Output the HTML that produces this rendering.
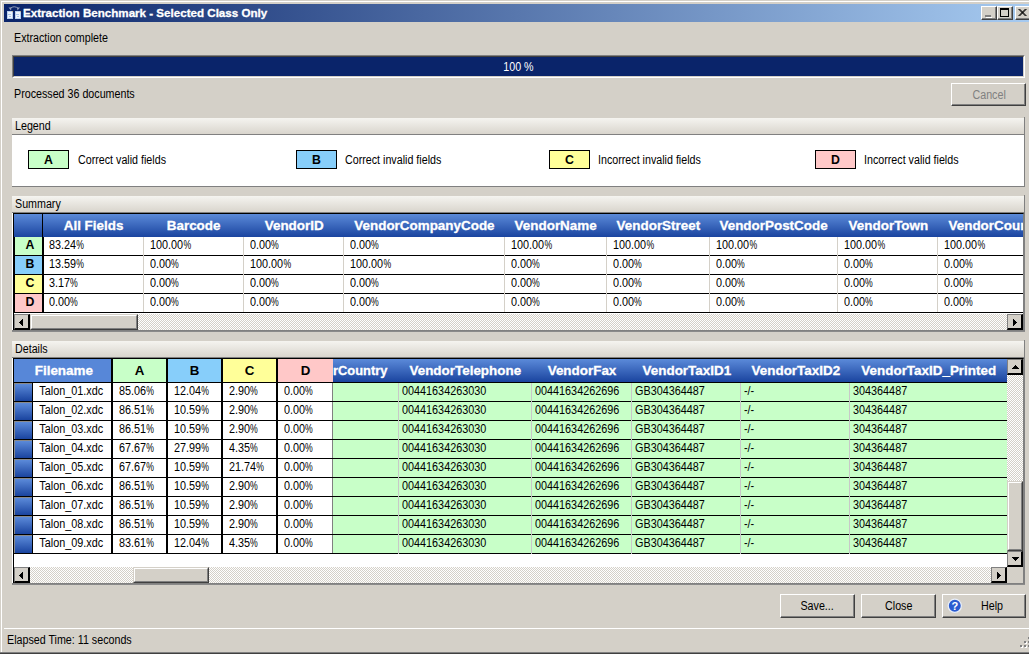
<!DOCTYPE html><html><head><meta charset="utf-8"><style>
*{margin:0;padding:0;box-sizing:border-box}
html,body{width:1029px;height:654px;overflow:hidden;background:#d4d0c8;font-family:"Liberation Sans",sans-serif;font-size:11px;color:#000}
.a{position:absolute}
.t{position:absolute;white-space:pre}
.btn{position:absolute;background:#d4d0c8;border-top:1px solid #fff;border-left:1px solid #fff;border-right:1px solid #404040;border-bottom:1px solid #404040}
.btn:after{content:"";position:absolute;left:0;top:0;right:0;bottom:0;border-right:1px solid #808080;border-bottom:1px solid #808080}
.thumb{position:absolute;background:#d4d0c8;border-top:1px solid #d4d0c8;border-left:1px solid #d4d0c8;border-right:1px solid #404040;border-bottom:1px solid #404040}
.thumb:after{content:"";position:absolute;left:0;top:0;right:0;bottom:0;border-top:1px solid #fff;border-left:1px solid #fff;border-right:1px solid #808080;border-bottom:1px solid #808080}
.sb{position:absolute;width:16px;height:16px;background:#d4d0c8;border-top:1px solid #808080;border-left:1px solid #808080;border-right:2px solid #000;border-bottom:2px solid #000}
.sb svg{position:absolute}
.ghdr{position:absolute;background:linear-gradient(#f5f4f0,#d9d5cd)}
.colh{position:absolute;background:linear-gradient(#5b8ad9,#1a449f)}
.chk{background-color:#fff;background-image:linear-gradient(45deg,#d4d0c8 25%,transparent 25%,transparent 75%,#d4d0c8 75%),linear-gradient(45deg,#d4d0c8 25%,transparent 25%,transparent 75%,#d4d0c8 75%);background-size:2px 2px;background-position:0 0,1px 1px}
</style></head><body>
<div class="a" style="left:1px;top:1px;width:1028px;height:1px;background:#fff"></div>
<div class="a" style="left:1px;top:1px;width:1px;height:651px;background:#fff"></div>
<div class="a" style="left:0;top:652px;width:1029px;height:1px;background:#808080"></div>
<div class="a" style="left:0;top:653px;width:1029px;height:1px;background:#404040"></div>
<div class="a" style="left:4px;top:4px;width:1025px;height:18px;background:linear-gradient(90deg,#0a246a,#a6caf0)"></div>
<svg class="a" style="left:4px;top:4px" width="18" height="18" viewBox="0 0 18 18">
<path d="M6 4.5 Q10 1 14.5 4.5" fill="none" stroke="#8f9ab8" stroke-width="1"/>
<path d="M4.5 3.5 L7 6.5 L7.5 3.5 Z M16 3.5 L13.5 6.5 L13 3.5 Z" fill="#8f9ab8"/>
<rect x="3" y="7" width="6" height="8" fill="#b8d0f0"/><rect x="11" y="7" width="6" height="8" fill="#b8d0f0"/>
<rect x="4" y="8" width="4" height="6" fill="#eef4fc"/><rect x="12" y="8" width="4" height="6" fill="#eef4fc"/>
<rect x="4" y="10" width="3" height="1" fill="#a8c4ea"/><rect x="12" y="10" width="3" height="1" fill="#a8c4ea"/>
<rect x="5" y="12" width="2" height="1" fill="#a8c4ea"/><rect x="13" y="12" width="2" height="1" fill="#a8c4ea"/>
<rect x="8" y="7" width="1" height="1" fill="#c8b080"/><rect x="16" y="7" width="1" height="1" fill="#c8b080"/>
</svg>
<div class="t" style="left:23px;top:3px;text-align:left;font-size:11.6px;line-height:20px;color:#fff;font-weight:bold;-webkit-text-stroke:0.3px #fff;"><span style="display:inline-block;transform:scaleX(1.0);transform-origin:0 0">Extraction Benchmark - Selected Class Only</span></div>
<div class="btn" style="left:981px;top:6px;width:16px;height:14px"></div>
<div class="btn" style="left:997px;top:6px;width:16px;height:14px"></div>
<div class="btn" style="left:1015px;top:6px;width:16px;height:14px"></div>
<div class="a" style="left:985px;top:15px;width:6px;height:2px;background:#808080"></div>
<div class="a" style="left:986px;top:17px;width:6px;height:1px;background:#fff"></div>
<div class="a" style="left:1000px;top:8px;width:9px;height:9px;border:1px solid #000;border-top-width:2px"></div>
<svg class="a" style="left:1018px;top:9px" width="10" height="7" viewBox="0 0 10 7"><path d="M0.5 0 L7.5 7 M7.5 0 L0.5 7 M1.5 0 L8.5 7 M8.5 0 L1.5 7" stroke="#000" stroke-width="1"/></svg>
<div class="t" style="left:14px;top:28px;text-align:left;font-size:12.3px;line-height:20px;color:#000;"><span style="display:inline-block;transform:scaleX(0.87);transform-origin:0 0">Extraction complete</span></div>
<div class="a" style="left:12px;top:55px;width:1013px;height:23px;border-top:1px solid #808080;border-left:1px solid #808080;border-right:1px solid #fff;border-bottom:1px solid #fff"></div>
<div class="a" style="left:13px;top:56px;width:1011px;height:21px;border-top:1px solid #404040;border-left:1px solid #404040;border-right:1px solid #d4d0c8;border-bottom:1px solid #d4d0c8;background:#0a246a"></div>
<div class="t" style="left:12px;top:57px;width:1013px;text-align:center;font-size:12.3px;line-height:20px;color:#fff;"><span style="display:inline-block;transform:scaleX(0.87);transform-origin:50% 0">100 %</span></div>
<div class="t" style="left:14px;top:84px;text-align:left;font-size:12.3px;line-height:20px;color:#000;"><span style="display:inline-block;transform:scaleX(0.87);transform-origin:0 0">Processed 36 documents</span></div>
<div class="btn" style="left:951px;top:83px;width:75px;height:23px"></div>
<div class="t" style="left:952px;top:85px;width:75px;text-align:center;font-size:12.3px;line-height:20px;color:#808080;"><span style="display:inline-block;transform:scaleX(0.87);transform-origin:50% 0">Cancel</span></div>
<div class="ghdr" style="left:12px;top:118px;width:1012px;height:16px"></div>
<div class="a" style="left:12px;top:134px;width:1012px;height:1px;background:#808080"></div>
<div class="a" style="left:12px;top:135px;width:1012px;height:51px;background:#fff"></div>
<div class="a" style="left:1024px;top:117px;width:1px;height:70px;background:#808080"></div>
<div class="a" style="left:12px;top:186px;width:1013px;height:1px;background:#808080"></div>
<div class="t" style="left:15px;top:116px;text-align:left;font-size:12.3px;line-height:20px;color:#000;"><span style="display:inline-block;transform:scaleX(0.87);transform-origin:0 0">Legend</span></div>
<div class="a" style="left:28px;top:150px;width:41px;height:19px;border:1px solid #000;background:#c8ffc8"></div>
<div class="t" style="left:28px;top:150px;width:41px;text-align:center;font-size:12.3px;line-height:20px;color:#000;font-weight:bold;"><span style="display:inline-block;transform:scaleX(1.0);transform-origin:50% 0">A</span></div>
<div class="t" style="left:78px;top:150px;text-align:left;font-size:12.3px;line-height:20px;color:#000;"><span style="display:inline-block;transform:scaleX(0.87);transform-origin:0 0">Correct valid fields</span></div>
<div class="a" style="left:296px;top:150px;width:41px;height:19px;border:1px solid #000;background:#87cefa"></div>
<div class="t" style="left:296px;top:150px;width:41px;text-align:center;font-size:12.3px;line-height:20px;color:#000;font-weight:bold;"><span style="display:inline-block;transform:scaleX(1.0);transform-origin:50% 0">B</span></div>
<div class="t" style="left:345px;top:150px;text-align:left;font-size:12.3px;line-height:20px;color:#000;"><span style="display:inline-block;transform:scaleX(0.87);transform-origin:0 0">Correct invalid fields</span></div>
<div class="a" style="left:549px;top:150px;width:41px;height:19px;border:1px solid #000;background:#ffff99"></div>
<div class="t" style="left:549px;top:150px;width:41px;text-align:center;font-size:12.3px;line-height:20px;color:#000;font-weight:bold;"><span style="display:inline-block;transform:scaleX(1.0);transform-origin:50% 0">C</span></div>
<div class="t" style="left:598px;top:150px;text-align:left;font-size:12.3px;line-height:20px;color:#000;"><span style="display:inline-block;transform:scaleX(0.87);transform-origin:0 0">Incorrect invalid fields</span></div>
<div class="a" style="left:815px;top:150px;width:41px;height:19px;border:1px solid #000;background:#ffc8c8"></div>
<div class="t" style="left:815px;top:150px;width:41px;text-align:center;font-size:12.3px;line-height:20px;color:#000;font-weight:bold;"><span style="display:inline-block;transform:scaleX(1.0);transform-origin:50% 0">D</span></div>
<div class="t" style="left:864px;top:150px;text-align:left;font-size:12.3px;line-height:20px;color:#000;"><span style="display:inline-block;transform:scaleX(0.87);transform-origin:0 0">Incorrect valid fields</span></div>
<div class="ghdr" style="left:12px;top:196px;width:1012px;height:16px"></div>
<div class="a" style="left:12px;top:212px;width:1012px;height:1px;background:#808080"></div>
<div class="a" style="left:12px;top:213px;width:1012px;height:117px;background:#fff"></div>
<div class="a" style="left:1024px;top:195px;width:1px;height:136px;background:#808080"></div>
<div class="a" style="left:12px;top:330px;width:1013px;height:1px;background:#808080"></div>
<div class="t" style="left:15px;top:194px;text-align:left;font-size:12.3px;line-height:20px;color:#000;"><span style="display:inline-block;transform:scaleX(0.87);transform-origin:0 0">Summary</span></div>
<div class="a" style="left:12px;top:331px;width:1013px;height:1px;background:#8a8a8a"></div>
<div class="a" style="left:13px;top:213px;width:1011px;height:117px;background:#fff;border-left:1px solid #000;border-top:1px solid #000;border-right:1px solid #808080"></div>
<div class="a" style="left:14px;top:214px;width:1009px;height:100px;overflow:hidden">
<div class="colh" style="left:0;top:0;width:28px;height:23px"></div>
<div class="a" style="left:0;top:23px;width:1px;height:76px;background:#000"></div>
<div class="a" style="left:28px;top:0;width:2px;height:99px;background:#000"></div>
<div class="colh" style="left:29px;top:0;width:101px;height:23px"></div>
<div class="t" style="left:29px;top:2px;width:101px;text-align:center;font-size:13.3px;line-height:20px;color:#fff;font-weight:bold;-webkit-text-stroke:0.3px #fff;"><span style="display:inline-block;transform:scaleX(1.01);transform-origin:50% 0">All Fields</span></div>
<div class="colh" style="left:130px;top:0;width:100px;height:23px"></div>
<div class="t" style="left:130px;top:2px;width:100px;text-align:center;font-size:13.3px;line-height:20px;color:#fff;font-weight:bold;-webkit-text-stroke:0.3px #fff;"><span style="display:inline-block;transform:scaleX(1.01);transform-origin:50% 0">Barcode</span></div>
<div class="colh" style="left:230px;top:0;width:100px;height:23px"></div>
<div class="t" style="left:230px;top:2px;width:100px;text-align:center;font-size:13.3px;line-height:20px;color:#fff;font-weight:bold;-webkit-text-stroke:0.3px #fff;"><span style="display:inline-block;transform:scaleX(1.01);transform-origin:50% 0">VendorID</span></div>
<div class="colh" style="left:330px;top:0;width:161px;height:23px"></div>
<div class="t" style="left:330px;top:2px;width:161px;text-align:center;font-size:13.3px;line-height:20px;color:#fff;font-weight:bold;-webkit-text-stroke:0.3px #fff;"><span style="display:inline-block;transform:scaleX(1.01);transform-origin:50% 0">VendorCompanyCode</span></div>
<div class="colh" style="left:491px;top:0;width:102px;height:23px"></div>
<div class="t" style="left:491px;top:2px;width:102px;text-align:center;font-size:13.3px;line-height:20px;color:#fff;font-weight:bold;-webkit-text-stroke:0.3px #fff;"><span style="display:inline-block;transform:scaleX(1.01);transform-origin:50% 0">VendorName</span></div>
<div class="colh" style="left:593px;top:0;width:103px;height:23px"></div>
<div class="t" style="left:593px;top:2px;width:103px;text-align:center;font-size:13.3px;line-height:20px;color:#fff;font-weight:bold;-webkit-text-stroke:0.3px #fff;"><span style="display:inline-block;transform:scaleX(1.01);transform-origin:50% 0">VendorStreet</span></div>
<div class="colh" style="left:696px;top:0;width:128px;height:23px"></div>
<div class="t" style="left:696px;top:2px;width:128px;text-align:center;font-size:13.3px;line-height:20px;color:#fff;font-weight:bold;-webkit-text-stroke:0.3px #fff;"><span style="display:inline-block;transform:scaleX(1.01);transform-origin:50% 0">VendorPostCode</span></div>
<div class="colh" style="left:824px;top:0;width:100px;height:23px"></div>
<div class="t" style="left:824px;top:2px;width:100px;text-align:center;font-size:13.3px;line-height:20px;color:#fff;font-weight:bold;-webkit-text-stroke:0.3px #fff;"><span style="display:inline-block;transform:scaleX(1.01);transform-origin:50% 0">VendorTown</span></div>
<div class="colh" style="left:924px;top:0;width:119px;height:23px"></div>
<div class="t" style="left:924px;top:2px;width:119px;text-align:center;font-size:13.3px;line-height:20px;color:#fff;font-weight:bold;-webkit-text-stroke:0.3px #fff;"><span style="display:inline-block;transform:scaleX(1.01);transform-origin:50% 0">VendorCountry</span></div>
<div class="a" style="left:1px;top:23px;width:27px;height:18px;background:#c8ffc8"></div>
<div class="t" style="left:2px;top:21px;width:28px;text-align:center;font-size:12.3px;line-height:20px;color:#000;font-weight:bold;"><span style="display:inline-block;transform:scaleX(1.0);transform-origin:50% 0">A</span></div>
<div class="t" style="left:35px;top:21px;text-align:left;font-size:12.3px;line-height:20px;color:#000;"><span style="display:inline-block;transform:scaleX(0.88);transform-origin:0 0">83.24<span style="display:inline-block;transform:scaleX(0.8);transform-origin:0 0;margin-right:-2px">%</span></span></div>
<div class="t" style="left:136px;top:21px;text-align:left;font-size:12.3px;line-height:20px;color:#000;"><span style="display:inline-block;transform:scaleX(0.88);transform-origin:0 0">100.00<span style="display:inline-block;transform:scaleX(0.8);transform-origin:0 0;margin-right:-2px">%</span></span></div>
<div class="t" style="left:236px;top:21px;text-align:left;font-size:12.3px;line-height:20px;color:#000;"><span style="display:inline-block;transform:scaleX(0.88);transform-origin:0 0">0.00<span style="display:inline-block;transform:scaleX(0.8);transform-origin:0 0;margin-right:-2px">%</span></span></div>
<div class="t" style="left:336px;top:21px;text-align:left;font-size:12.3px;line-height:20px;color:#000;"><span style="display:inline-block;transform:scaleX(0.88);transform-origin:0 0">0.00<span style="display:inline-block;transform:scaleX(0.8);transform-origin:0 0;margin-right:-2px">%</span></span></div>
<div class="t" style="left:497px;top:21px;text-align:left;font-size:12.3px;line-height:20px;color:#000;"><span style="display:inline-block;transform:scaleX(0.88);transform-origin:0 0">100.00<span style="display:inline-block;transform:scaleX(0.8);transform-origin:0 0;margin-right:-2px">%</span></span></div>
<div class="t" style="left:599px;top:21px;text-align:left;font-size:12.3px;line-height:20px;color:#000;"><span style="display:inline-block;transform:scaleX(0.88);transform-origin:0 0">100.00<span style="display:inline-block;transform:scaleX(0.8);transform-origin:0 0;margin-right:-2px">%</span></span></div>
<div class="t" style="left:702px;top:21px;text-align:left;font-size:12.3px;line-height:20px;color:#000;"><span style="display:inline-block;transform:scaleX(0.88);transform-origin:0 0">100.00<span style="display:inline-block;transform:scaleX(0.8);transform-origin:0 0;margin-right:-2px">%</span></span></div>
<div class="t" style="left:830px;top:21px;text-align:left;font-size:12.3px;line-height:20px;color:#000;"><span style="display:inline-block;transform:scaleX(0.88);transform-origin:0 0">100.00<span style="display:inline-block;transform:scaleX(0.8);transform-origin:0 0;margin-right:-2px">%</span></span></div>
<div class="t" style="left:930px;top:21px;text-align:left;font-size:12.3px;line-height:20px;color:#000;"><span style="display:inline-block;transform:scaleX(0.88);transform-origin:0 0">100.00<span style="display:inline-block;transform:scaleX(0.8);transform-origin:0 0;margin-right:-2px">%</span></span></div>
<div class="a" style="left:0;top:41px;width:1009px;height:1px;background:#000"></div>
<div class="a" style="left:1px;top:42px;width:27px;height:18px;background:#87cefa"></div>
<div class="t" style="left:2px;top:40px;width:28px;text-align:center;font-size:12.3px;line-height:20px;color:#000;font-weight:bold;"><span style="display:inline-block;transform:scaleX(1.0);transform-origin:50% 0">B</span></div>
<div class="t" style="left:35px;top:40px;text-align:left;font-size:12.3px;line-height:20px;color:#000;"><span style="display:inline-block;transform:scaleX(0.88);transform-origin:0 0">13.59<span style="display:inline-block;transform:scaleX(0.8);transform-origin:0 0;margin-right:-2px">%</span></span></div>
<div class="t" style="left:136px;top:40px;text-align:left;font-size:12.3px;line-height:20px;color:#000;"><span style="display:inline-block;transform:scaleX(0.88);transform-origin:0 0">0.00<span style="display:inline-block;transform:scaleX(0.8);transform-origin:0 0;margin-right:-2px">%</span></span></div>
<div class="t" style="left:236px;top:40px;text-align:left;font-size:12.3px;line-height:20px;color:#000;"><span style="display:inline-block;transform:scaleX(0.88);transform-origin:0 0">100.00<span style="display:inline-block;transform:scaleX(0.8);transform-origin:0 0;margin-right:-2px">%</span></span></div>
<div class="t" style="left:336px;top:40px;text-align:left;font-size:12.3px;line-height:20px;color:#000;"><span style="display:inline-block;transform:scaleX(0.88);transform-origin:0 0">100.00<span style="display:inline-block;transform:scaleX(0.8);transform-origin:0 0;margin-right:-2px">%</span></span></div>
<div class="t" style="left:497px;top:40px;text-align:left;font-size:12.3px;line-height:20px;color:#000;"><span style="display:inline-block;transform:scaleX(0.88);transform-origin:0 0">0.00<span style="display:inline-block;transform:scaleX(0.8);transform-origin:0 0;margin-right:-2px">%</span></span></div>
<div class="t" style="left:599px;top:40px;text-align:left;font-size:12.3px;line-height:20px;color:#000;"><span style="display:inline-block;transform:scaleX(0.88);transform-origin:0 0">0.00<span style="display:inline-block;transform:scaleX(0.8);transform-origin:0 0;margin-right:-2px">%</span></span></div>
<div class="t" style="left:702px;top:40px;text-align:left;font-size:12.3px;line-height:20px;color:#000;"><span style="display:inline-block;transform:scaleX(0.88);transform-origin:0 0">0.00<span style="display:inline-block;transform:scaleX(0.8);transform-origin:0 0;margin-right:-2px">%</span></span></div>
<div class="t" style="left:830px;top:40px;text-align:left;font-size:12.3px;line-height:20px;color:#000;"><span style="display:inline-block;transform:scaleX(0.88);transform-origin:0 0">0.00<span style="display:inline-block;transform:scaleX(0.8);transform-origin:0 0;margin-right:-2px">%</span></span></div>
<div class="t" style="left:930px;top:40px;text-align:left;font-size:12.3px;line-height:20px;color:#000;"><span style="display:inline-block;transform:scaleX(0.88);transform-origin:0 0">0.00<span style="display:inline-block;transform:scaleX(0.8);transform-origin:0 0;margin-right:-2px">%</span></span></div>
<div class="a" style="left:0;top:60px;width:1009px;height:1px;background:#000"></div>
<div class="a" style="left:1px;top:61px;width:27px;height:18px;background:#ffff99"></div>
<div class="t" style="left:2px;top:59px;width:28px;text-align:center;font-size:12.3px;line-height:20px;color:#000;font-weight:bold;"><span style="display:inline-block;transform:scaleX(1.0);transform-origin:50% 0">C</span></div>
<div class="t" style="left:35px;top:59px;text-align:left;font-size:12.3px;line-height:20px;color:#000;"><span style="display:inline-block;transform:scaleX(0.88);transform-origin:0 0">3.17<span style="display:inline-block;transform:scaleX(0.8);transform-origin:0 0;margin-right:-2px">%</span></span></div>
<div class="t" style="left:136px;top:59px;text-align:left;font-size:12.3px;line-height:20px;color:#000;"><span style="display:inline-block;transform:scaleX(0.88);transform-origin:0 0">0.00<span style="display:inline-block;transform:scaleX(0.8);transform-origin:0 0;margin-right:-2px">%</span></span></div>
<div class="t" style="left:236px;top:59px;text-align:left;font-size:12.3px;line-height:20px;color:#000;"><span style="display:inline-block;transform:scaleX(0.88);transform-origin:0 0">0.00<span style="display:inline-block;transform:scaleX(0.8);transform-origin:0 0;margin-right:-2px">%</span></span></div>
<div class="t" style="left:336px;top:59px;text-align:left;font-size:12.3px;line-height:20px;color:#000;"><span style="display:inline-block;transform:scaleX(0.88);transform-origin:0 0">0.00<span style="display:inline-block;transform:scaleX(0.8);transform-origin:0 0;margin-right:-2px">%</span></span></div>
<div class="t" style="left:497px;top:59px;text-align:left;font-size:12.3px;line-height:20px;color:#000;"><span style="display:inline-block;transform:scaleX(0.88);transform-origin:0 0">0.00<span style="display:inline-block;transform:scaleX(0.8);transform-origin:0 0;margin-right:-2px">%</span></span></div>
<div class="t" style="left:599px;top:59px;text-align:left;font-size:12.3px;line-height:20px;color:#000;"><span style="display:inline-block;transform:scaleX(0.88);transform-origin:0 0">0.00<span style="display:inline-block;transform:scaleX(0.8);transform-origin:0 0;margin-right:-2px">%</span></span></div>
<div class="t" style="left:702px;top:59px;text-align:left;font-size:12.3px;line-height:20px;color:#000;"><span style="display:inline-block;transform:scaleX(0.88);transform-origin:0 0">0.00<span style="display:inline-block;transform:scaleX(0.8);transform-origin:0 0;margin-right:-2px">%</span></span></div>
<div class="t" style="left:830px;top:59px;text-align:left;font-size:12.3px;line-height:20px;color:#000;"><span style="display:inline-block;transform:scaleX(0.88);transform-origin:0 0">0.00<span style="display:inline-block;transform:scaleX(0.8);transform-origin:0 0;margin-right:-2px">%</span></span></div>
<div class="t" style="left:930px;top:59px;text-align:left;font-size:12.3px;line-height:20px;color:#000;"><span style="display:inline-block;transform:scaleX(0.88);transform-origin:0 0">0.00<span style="display:inline-block;transform:scaleX(0.8);transform-origin:0 0;margin-right:-2px">%</span></span></div>
<div class="a" style="left:0;top:79px;width:1009px;height:1px;background:#000"></div>
<div class="a" style="left:1px;top:80px;width:27px;height:18px;background:#ffc8c8"></div>
<div class="t" style="left:2px;top:78px;width:28px;text-align:center;font-size:12.3px;line-height:20px;color:#000;font-weight:bold;"><span style="display:inline-block;transform:scaleX(1.0);transform-origin:50% 0">D</span></div>
<div class="t" style="left:35px;top:78px;text-align:left;font-size:12.3px;line-height:20px;color:#000;"><span style="display:inline-block;transform:scaleX(0.88);transform-origin:0 0">0.00<span style="display:inline-block;transform:scaleX(0.8);transform-origin:0 0;margin-right:-2px">%</span></span></div>
<div class="t" style="left:136px;top:78px;text-align:left;font-size:12.3px;line-height:20px;color:#000;"><span style="display:inline-block;transform:scaleX(0.88);transform-origin:0 0">0.00<span style="display:inline-block;transform:scaleX(0.8);transform-origin:0 0;margin-right:-2px">%</span></span></div>
<div class="t" style="left:236px;top:78px;text-align:left;font-size:12.3px;line-height:20px;color:#000;"><span style="display:inline-block;transform:scaleX(0.88);transform-origin:0 0">0.00<span style="display:inline-block;transform:scaleX(0.8);transform-origin:0 0;margin-right:-2px">%</span></span></div>
<div class="t" style="left:336px;top:78px;text-align:left;font-size:12.3px;line-height:20px;color:#000;"><span style="display:inline-block;transform:scaleX(0.88);transform-origin:0 0">0.00<span style="display:inline-block;transform:scaleX(0.8);transform-origin:0 0;margin-right:-2px">%</span></span></div>
<div class="t" style="left:497px;top:78px;text-align:left;font-size:12.3px;line-height:20px;color:#000;"><span style="display:inline-block;transform:scaleX(0.88);transform-origin:0 0">0.00<span style="display:inline-block;transform:scaleX(0.8);transform-origin:0 0;margin-right:-2px">%</span></span></div>
<div class="t" style="left:599px;top:78px;text-align:left;font-size:12.3px;line-height:20px;color:#000;"><span style="display:inline-block;transform:scaleX(0.88);transform-origin:0 0">0.00<span style="display:inline-block;transform:scaleX(0.8);transform-origin:0 0;margin-right:-2px">%</span></span></div>
<div class="t" style="left:702px;top:78px;text-align:left;font-size:12.3px;line-height:20px;color:#000;"><span style="display:inline-block;transform:scaleX(0.88);transform-origin:0 0">0.00<span style="display:inline-block;transform:scaleX(0.8);transform-origin:0 0;margin-right:-2px">%</span></span></div>
<div class="t" style="left:830px;top:78px;text-align:left;font-size:12.3px;line-height:20px;color:#000;"><span style="display:inline-block;transform:scaleX(0.88);transform-origin:0 0">0.00<span style="display:inline-block;transform:scaleX(0.8);transform-origin:0 0;margin-right:-2px">%</span></span></div>
<div class="t" style="left:930px;top:78px;text-align:left;font-size:12.3px;line-height:20px;color:#000;"><span style="display:inline-block;transform:scaleX(0.88);transform-origin:0 0">0.00<span style="display:inline-block;transform:scaleX(0.8);transform-origin:0 0;margin-right:-2px">%</span></span></div>
<div class="a" style="left:0;top:98px;width:1009px;height:1px;background:#000"></div>
<div class="a" style="left:129px;top:23px;width:1px;height:75px;background:#d4d0c8"></div>
<div class="a" style="left:229px;top:23px;width:1px;height:75px;background:#d4d0c8"></div>
<div class="a" style="left:329px;top:23px;width:1px;height:75px;background:#d4d0c8"></div>
<div class="a" style="left:490px;top:23px;width:1px;height:75px;background:#d4d0c8"></div>
<div class="a" style="left:592px;top:23px;width:1px;height:75px;background:#d4d0c8"></div>
<div class="a" style="left:695px;top:23px;width:1px;height:75px;background:#d4d0c8"></div>
<div class="a" style="left:823px;top:23px;width:1px;height:75px;background:#d4d0c8"></div>
<div class="a" style="left:923px;top:23px;width:1px;height:75px;background:#d4d0c8"></div>
</div>
<div class="a chk" style="left:14px;top:314px;width:1009px;height:16px"></div>
<div class="sb" style="left:14px;top:314px"><svg width="16" height="16" style="left:-1px;top:-1px" fill="#000"><rect x="5" y="8" width="1" height="1"/><rect x="6" y="7" width="1" height="3"/><rect x="7" y="6" width="1" height="5"/><rect x="8" y="5" width="1" height="7"/></svg></div>
<div class="thumb" style="left:30px;top:314px;width:108px;height:16px"></div>
<div class="sb" style="left:1007px;top:314px"><svg width="16" height="16" style="left:-1px;top:-1px" fill="#000"><rect x="9" y="8" width="1" height="1"/><rect x="8" y="7" width="1" height="3"/><rect x="7" y="6" width="1" height="5"/><rect x="6" y="5" width="1" height="7"/></svg></div>
<div class="ghdr" style="left:12px;top:341px;width:1012px;height:16px"></div>
<div class="a" style="left:12px;top:357px;width:1012px;height:1px;background:#808080"></div>
<div class="a" style="left:12px;top:358px;width:1012px;height:225px;background:#fff"></div>
<div class="a" style="left:1024px;top:340px;width:1px;height:244px;background:#808080"></div>
<div class="a" style="left:12px;top:583px;width:1013px;height:1px;background:#808080"></div>
<div class="t" style="left:15px;top:339px;text-align:left;font-size:12.3px;line-height:20px;color:#000;"><span style="display:inline-block;transform:scaleX(0.87);transform-origin:0 0">Details</span></div>
<div class="a" style="left:12px;top:584px;width:1013px;height:1px;background:#8a8a8a"></div>
<div class="a" style="left:13px;top:358px;width:1011px;height:225px;background:#fff;border-left:1px solid #000;border-top:1px solid #000;border-right:1px solid #808080"></div>
<div class="a" style="left:14px;top:359px;width:993px;height:208px;overflow:hidden">
<div class="a" style="left:0;top:0;width:97px;height:23px;background:#5787d8"></div>
<div class="t" style="left:0px;top:2px;width:99px;text-align:center;font-size:13.3px;line-height:20px;color:#fff;font-weight:bold;-webkit-text-stroke:0.3px #fff;"><span style="display:inline-block;transform:scaleX(1.01);transform-origin:50% 0">Filename</span></div>
<div class="a" style="left:99px;top:0;width:53px;height:23px;background:#c8ffc8"></div>
<div class="t" style="left:99px;top:2px;width:53px;text-align:center;font-size:13.3px;line-height:20px;color:#000;font-weight:bold;"><span style="display:inline-block;transform:scaleX(1.0);transform-origin:50% 0">A</span></div>
<div class="a" style="left:154px;top:0;width:53px;height:23px;background:#87cefa"></div>
<div class="t" style="left:154px;top:2px;width:53px;text-align:center;font-size:13.3px;line-height:20px;color:#000;font-weight:bold;"><span style="display:inline-block;transform:scaleX(1.0);transform-origin:50% 0">B</span></div>
<div class="a" style="left:209px;top:0;width:53px;height:23px;background:#ffff99"></div>
<div class="t" style="left:209px;top:2px;width:53px;text-align:center;font-size:13.3px;line-height:20px;color:#000;font-weight:bold;"><span style="display:inline-block;transform:scaleX(1.0);transform-origin:50% 0">C</span></div>
<div class="a" style="left:264px;top:0;width:55px;height:23px;background:#ffc8c8"></div>
<div class="t" style="left:264px;top:2px;width:55px;text-align:center;font-size:13.3px;line-height:20px;color:#000;font-weight:bold;"><span style="display:inline-block;transform:scaleX(1.0);transform-origin:50% 0">D</span></div>
<div class="a" style="left:97px;top:0;width:1px;height:195px;background:#000"></div>
<div class="a" style="left:98px;top:0;width:1px;height:195px;background:#000"></div>
<div class="a" style="left:152px;top:0;width:1px;height:195px;background:#000"></div>
<div class="a" style="left:153px;top:0;width:1px;height:195px;background:#000"></div>
<div class="a" style="left:207px;top:0;width:1px;height:195px;background:#000"></div>
<div class="a" style="left:208px;top:0;width:1px;height:195px;background:#000"></div>
<div class="a" style="left:262px;top:0;width:1px;height:195px;background:#000"></div>
<div class="a" style="left:263px;top:0;width:1px;height:195px;background:#000"></div>
<div class="a" style="left:18px;top:23px;width:1px;height:172px;background:#000"></div>
<div class="a" style="left:318px;top:24px;width:1px;height:171px;background:#808080"></div>
<div class="colh" style="left:319px;top:0;width:674px;height:23px"></div>
<div class="a" style="left:319px;top:0;width:66px;height:23px;overflow:hidden">
<div class="t" style="left:0px;top:2px;text-align:left;font-size:13.3px;line-height:20px;color:#fff;font-weight:bold;-webkit-text-stroke:0.3px #fff;"><span style="display:inline-block;transform:scaleX(0.97);transform-origin:0 0">rCountry</span></div>
</div>
<div class="t" style="left:385px;top:2px;width:133px;text-align:center;font-size:13.3px;line-height:20px;color:#fff;font-weight:bold;-webkit-text-stroke:0.3px #fff;"><span style="display:inline-block;transform:scaleX(1.01);transform-origin:50% 0">VendorTelephone</span></div>
<div class="t" style="left:518px;top:2px;width:100px;text-align:center;font-size:13.3px;line-height:20px;color:#fff;font-weight:bold;-webkit-text-stroke:0.3px #fff;"><span style="display:inline-block;transform:scaleX(1.01);transform-origin:50% 0">VendorFax</span></div>
<div class="t" style="left:618px;top:2px;width:109px;text-align:center;font-size:13.3px;line-height:20px;color:#fff;font-weight:bold;-webkit-text-stroke:0.3px #fff;"><span style="display:inline-block;transform:scaleX(1.01);transform-origin:50% 0">VendorTaxID1</span></div>
<div class="t" style="left:727px;top:2px;width:109px;text-align:center;font-size:13.3px;line-height:20px;color:#fff;font-weight:bold;-webkit-text-stroke:0.3px #fff;"><span style="display:inline-block;transform:scaleX(1.01);transform-origin:50% 0">VendorTaxID2</span></div>
<div class="t" style="left:836px;top:2px;width:157px;text-align:center;font-size:13.3px;line-height:20px;color:#fff;font-weight:bold;-webkit-text-stroke:0.3px #fff;"><span style="display:inline-block;transform:scaleX(1.01);transform-origin:50% 0">VendorTaxID_Printed</span></div>
<div class="a" style="left:0;top:23px;width:993px;height:1px;background:#000"></div>
<div class="a" style="left:0;top:24px;width:18px;height:18px;background:linear-gradient(#5b8ad9,#1a449f);border-top:1px solid #8a8a8a;border-left:1px solid #8a8a8a"></div>
<div class="t" style="left:19px;top:22px;width:76px;text-align:center;font-size:12.3px;line-height:20px;color:#000;"><span style="display:inline-block;transform:scaleX(0.88);transform-origin:50% 0">Talon_01.xdc</span></div>
<div class="t" style="left:105px;top:22px;text-align:left;font-size:12.3px;line-height:20px;color:#000;"><span style="display:inline-block;transform:scaleX(0.88);transform-origin:0 0">85.06<span style="display:inline-block;transform:scaleX(0.8);transform-origin:0 0;margin-right:-2px">%</span></span></div>
<div class="t" style="left:160px;top:22px;text-align:left;font-size:12.3px;line-height:20px;color:#000;"><span style="display:inline-block;transform:scaleX(0.88);transform-origin:0 0">12.04<span style="display:inline-block;transform:scaleX(0.8);transform-origin:0 0;margin-right:-2px">%</span></span></div>
<div class="t" style="left:215px;top:22px;text-align:left;font-size:12.3px;line-height:20px;color:#000;"><span style="display:inline-block;transform:scaleX(0.88);transform-origin:0 0">2.90<span style="display:inline-block;transform:scaleX(0.8);transform-origin:0 0;margin-right:-2px">%</span></span></div>
<div class="t" style="left:270px;top:22px;text-align:left;font-size:12.3px;line-height:20px;color:#000;"><span style="display:inline-block;transform:scaleX(0.88);transform-origin:0 0">0.00<span style="display:inline-block;transform:scaleX(0.8);transform-origin:0 0;margin-right:-2px">%</span></span></div>
<div class="a" style="left:319px;top:24px;width:674px;height:18px;background:#c8ffc8"></div>
<div class="t" style="left:388px;top:22px;text-align:left;font-size:12.3px;line-height:20px;color:#000;"><span style="display:inline-block;transform:scaleX(0.88);transform-origin:0 0">00441634263030</span></div>
<div class="t" style="left:521px;top:22px;text-align:left;font-size:12.3px;line-height:20px;color:#000;"><span style="display:inline-block;transform:scaleX(0.88);transform-origin:0 0">00441634262696</span></div>
<div class="t" style="left:621px;top:22px;text-align:left;font-size:12.3px;line-height:20px;color:#000;"><span style="display:inline-block;transform:scaleX(0.88);transform-origin:0 0">GB304364487</span></div>
<div class="t" style="left:730px;top:22px;text-align:left;font-size:12.3px;line-height:20px;color:#000;"><span style="display:inline-block;transform:scaleX(0.88);transform-origin:0 0">-/-</span></div>
<div class="t" style="left:839px;top:22px;text-align:left;font-size:12.3px;line-height:20px;color:#000;"><span style="display:inline-block;transform:scaleX(0.88);transform-origin:0 0">304364487</span></div>
<div class="a" style="left:0;top:42px;width:993px;height:1px;background:#000"></div>
<div class="a" style="left:0;top:43px;width:18px;height:18px;background:linear-gradient(#5b8ad9,#1a449f);border-top:1px solid #8a8a8a;border-left:1px solid #8a8a8a"></div>
<div class="t" style="left:19px;top:41px;width:76px;text-align:center;font-size:12.3px;line-height:20px;color:#000;"><span style="display:inline-block;transform:scaleX(0.88);transform-origin:50% 0">Talon_02.xdc</span></div>
<div class="t" style="left:105px;top:41px;text-align:left;font-size:12.3px;line-height:20px;color:#000;"><span style="display:inline-block;transform:scaleX(0.88);transform-origin:0 0">86.51<span style="display:inline-block;transform:scaleX(0.8);transform-origin:0 0;margin-right:-2px">%</span></span></div>
<div class="t" style="left:160px;top:41px;text-align:left;font-size:12.3px;line-height:20px;color:#000;"><span style="display:inline-block;transform:scaleX(0.88);transform-origin:0 0">10.59<span style="display:inline-block;transform:scaleX(0.8);transform-origin:0 0;margin-right:-2px">%</span></span></div>
<div class="t" style="left:215px;top:41px;text-align:left;font-size:12.3px;line-height:20px;color:#000;"><span style="display:inline-block;transform:scaleX(0.88);transform-origin:0 0">2.90<span style="display:inline-block;transform:scaleX(0.8);transform-origin:0 0;margin-right:-2px">%</span></span></div>
<div class="t" style="left:270px;top:41px;text-align:left;font-size:12.3px;line-height:20px;color:#000;"><span style="display:inline-block;transform:scaleX(0.88);transform-origin:0 0">0.00<span style="display:inline-block;transform:scaleX(0.8);transform-origin:0 0;margin-right:-2px">%</span></span></div>
<div class="a" style="left:319px;top:43px;width:674px;height:18px;background:#c8ffc8"></div>
<div class="t" style="left:388px;top:41px;text-align:left;font-size:12.3px;line-height:20px;color:#000;"><span style="display:inline-block;transform:scaleX(0.88);transform-origin:0 0">00441634263030</span></div>
<div class="t" style="left:521px;top:41px;text-align:left;font-size:12.3px;line-height:20px;color:#000;"><span style="display:inline-block;transform:scaleX(0.88);transform-origin:0 0">00441634262696</span></div>
<div class="t" style="left:621px;top:41px;text-align:left;font-size:12.3px;line-height:20px;color:#000;"><span style="display:inline-block;transform:scaleX(0.88);transform-origin:0 0">GB304364487</span></div>
<div class="t" style="left:730px;top:41px;text-align:left;font-size:12.3px;line-height:20px;color:#000;"><span style="display:inline-block;transform:scaleX(0.88);transform-origin:0 0">-/-</span></div>
<div class="t" style="left:839px;top:41px;text-align:left;font-size:12.3px;line-height:20px;color:#000;"><span style="display:inline-block;transform:scaleX(0.88);transform-origin:0 0">304364487</span></div>
<div class="a" style="left:0;top:61px;width:993px;height:1px;background:#000"></div>
<div class="a" style="left:0;top:62px;width:18px;height:18px;background:linear-gradient(#5b8ad9,#1a449f);border-top:1px solid #8a8a8a;border-left:1px solid #8a8a8a"></div>
<div class="t" style="left:19px;top:60px;width:76px;text-align:center;font-size:12.3px;line-height:20px;color:#000;"><span style="display:inline-block;transform:scaleX(0.88);transform-origin:50% 0">Talon_03.xdc</span></div>
<div class="t" style="left:105px;top:60px;text-align:left;font-size:12.3px;line-height:20px;color:#000;"><span style="display:inline-block;transform:scaleX(0.88);transform-origin:0 0">86.51<span style="display:inline-block;transform:scaleX(0.8);transform-origin:0 0;margin-right:-2px">%</span></span></div>
<div class="t" style="left:160px;top:60px;text-align:left;font-size:12.3px;line-height:20px;color:#000;"><span style="display:inline-block;transform:scaleX(0.88);transform-origin:0 0">10.59<span style="display:inline-block;transform:scaleX(0.8);transform-origin:0 0;margin-right:-2px">%</span></span></div>
<div class="t" style="left:215px;top:60px;text-align:left;font-size:12.3px;line-height:20px;color:#000;"><span style="display:inline-block;transform:scaleX(0.88);transform-origin:0 0">2.90<span style="display:inline-block;transform:scaleX(0.8);transform-origin:0 0;margin-right:-2px">%</span></span></div>
<div class="t" style="left:270px;top:60px;text-align:left;font-size:12.3px;line-height:20px;color:#000;"><span style="display:inline-block;transform:scaleX(0.88);transform-origin:0 0">0.00<span style="display:inline-block;transform:scaleX(0.8);transform-origin:0 0;margin-right:-2px">%</span></span></div>
<div class="a" style="left:319px;top:62px;width:674px;height:18px;background:#c8ffc8"></div>
<div class="t" style="left:388px;top:60px;text-align:left;font-size:12.3px;line-height:20px;color:#000;"><span style="display:inline-block;transform:scaleX(0.88);transform-origin:0 0">00441634263030</span></div>
<div class="t" style="left:521px;top:60px;text-align:left;font-size:12.3px;line-height:20px;color:#000;"><span style="display:inline-block;transform:scaleX(0.88);transform-origin:0 0">00441634262696</span></div>
<div class="t" style="left:621px;top:60px;text-align:left;font-size:12.3px;line-height:20px;color:#000;"><span style="display:inline-block;transform:scaleX(0.88);transform-origin:0 0">GB304364487</span></div>
<div class="t" style="left:730px;top:60px;text-align:left;font-size:12.3px;line-height:20px;color:#000;"><span style="display:inline-block;transform:scaleX(0.88);transform-origin:0 0">-/-</span></div>
<div class="t" style="left:839px;top:60px;text-align:left;font-size:12.3px;line-height:20px;color:#000;"><span style="display:inline-block;transform:scaleX(0.88);transform-origin:0 0">304364487</span></div>
<div class="a" style="left:0;top:80px;width:993px;height:1px;background:#000"></div>
<div class="a" style="left:0;top:81px;width:18px;height:18px;background:linear-gradient(#5b8ad9,#1a449f);border-top:1px solid #8a8a8a;border-left:1px solid #8a8a8a"></div>
<div class="t" style="left:19px;top:79px;width:76px;text-align:center;font-size:12.3px;line-height:20px;color:#000;"><span style="display:inline-block;transform:scaleX(0.88);transform-origin:50% 0">Talon_04.xdc</span></div>
<div class="t" style="left:105px;top:79px;text-align:left;font-size:12.3px;line-height:20px;color:#000;"><span style="display:inline-block;transform:scaleX(0.88);transform-origin:0 0">67.67<span style="display:inline-block;transform:scaleX(0.8);transform-origin:0 0;margin-right:-2px">%</span></span></div>
<div class="t" style="left:160px;top:79px;text-align:left;font-size:12.3px;line-height:20px;color:#000;"><span style="display:inline-block;transform:scaleX(0.88);transform-origin:0 0">27.99<span style="display:inline-block;transform:scaleX(0.8);transform-origin:0 0;margin-right:-2px">%</span></span></div>
<div class="t" style="left:215px;top:79px;text-align:left;font-size:12.3px;line-height:20px;color:#000;"><span style="display:inline-block;transform:scaleX(0.88);transform-origin:0 0">4.35<span style="display:inline-block;transform:scaleX(0.8);transform-origin:0 0;margin-right:-2px">%</span></span></div>
<div class="t" style="left:270px;top:79px;text-align:left;font-size:12.3px;line-height:20px;color:#000;"><span style="display:inline-block;transform:scaleX(0.88);transform-origin:0 0">0.00<span style="display:inline-block;transform:scaleX(0.8);transform-origin:0 0;margin-right:-2px">%</span></span></div>
<div class="a" style="left:319px;top:81px;width:674px;height:18px;background:#c8ffc8"></div>
<div class="t" style="left:388px;top:79px;text-align:left;font-size:12.3px;line-height:20px;color:#000;"><span style="display:inline-block;transform:scaleX(0.88);transform-origin:0 0">00441634263030</span></div>
<div class="t" style="left:521px;top:79px;text-align:left;font-size:12.3px;line-height:20px;color:#000;"><span style="display:inline-block;transform:scaleX(0.88);transform-origin:0 0">00441634262696</span></div>
<div class="t" style="left:621px;top:79px;text-align:left;font-size:12.3px;line-height:20px;color:#000;"><span style="display:inline-block;transform:scaleX(0.88);transform-origin:0 0">GB304364487</span></div>
<div class="t" style="left:730px;top:79px;text-align:left;font-size:12.3px;line-height:20px;color:#000;"><span style="display:inline-block;transform:scaleX(0.88);transform-origin:0 0">-/-</span></div>
<div class="t" style="left:839px;top:79px;text-align:left;font-size:12.3px;line-height:20px;color:#000;"><span style="display:inline-block;transform:scaleX(0.88);transform-origin:0 0">304364487</span></div>
<div class="a" style="left:0;top:99px;width:993px;height:1px;background:#000"></div>
<div class="a" style="left:0;top:100px;width:18px;height:18px;background:linear-gradient(#5b8ad9,#1a449f);border-top:1px solid #8a8a8a;border-left:1px solid #8a8a8a"></div>
<div class="t" style="left:19px;top:98px;width:76px;text-align:center;font-size:12.3px;line-height:20px;color:#000;"><span style="display:inline-block;transform:scaleX(0.88);transform-origin:50% 0">Talon_05.xdc</span></div>
<div class="t" style="left:105px;top:98px;text-align:left;font-size:12.3px;line-height:20px;color:#000;"><span style="display:inline-block;transform:scaleX(0.88);transform-origin:0 0">67.67<span style="display:inline-block;transform:scaleX(0.8);transform-origin:0 0;margin-right:-2px">%</span></span></div>
<div class="t" style="left:160px;top:98px;text-align:left;font-size:12.3px;line-height:20px;color:#000;"><span style="display:inline-block;transform:scaleX(0.88);transform-origin:0 0">10.59<span style="display:inline-block;transform:scaleX(0.8);transform-origin:0 0;margin-right:-2px">%</span></span></div>
<div class="t" style="left:215px;top:98px;text-align:left;font-size:12.3px;line-height:20px;color:#000;"><span style="display:inline-block;transform:scaleX(0.88);transform-origin:0 0">21.74<span style="display:inline-block;transform:scaleX(0.8);transform-origin:0 0;margin-right:-2px">%</span></span></div>
<div class="t" style="left:270px;top:98px;text-align:left;font-size:12.3px;line-height:20px;color:#000;"><span style="display:inline-block;transform:scaleX(0.88);transform-origin:0 0">0.00<span style="display:inline-block;transform:scaleX(0.8);transform-origin:0 0;margin-right:-2px">%</span></span></div>
<div class="a" style="left:319px;top:100px;width:674px;height:18px;background:#c8ffc8"></div>
<div class="t" style="left:388px;top:98px;text-align:left;font-size:12.3px;line-height:20px;color:#000;"><span style="display:inline-block;transform:scaleX(0.88);transform-origin:0 0">00441634263030</span></div>
<div class="t" style="left:521px;top:98px;text-align:left;font-size:12.3px;line-height:20px;color:#000;"><span style="display:inline-block;transform:scaleX(0.88);transform-origin:0 0">00441634262696</span></div>
<div class="t" style="left:621px;top:98px;text-align:left;font-size:12.3px;line-height:20px;color:#000;"><span style="display:inline-block;transform:scaleX(0.88);transform-origin:0 0">GB304364487</span></div>
<div class="t" style="left:730px;top:98px;text-align:left;font-size:12.3px;line-height:20px;color:#000;"><span style="display:inline-block;transform:scaleX(0.88);transform-origin:0 0">-/-</span></div>
<div class="t" style="left:839px;top:98px;text-align:left;font-size:12.3px;line-height:20px;color:#000;"><span style="display:inline-block;transform:scaleX(0.88);transform-origin:0 0">304364487</span></div>
<div class="a" style="left:0;top:118px;width:993px;height:1px;background:#000"></div>
<div class="a" style="left:0;top:119px;width:18px;height:18px;background:linear-gradient(#5b8ad9,#1a449f);border-top:1px solid #8a8a8a;border-left:1px solid #8a8a8a"></div>
<div class="t" style="left:19px;top:117px;width:76px;text-align:center;font-size:12.3px;line-height:20px;color:#000;"><span style="display:inline-block;transform:scaleX(0.88);transform-origin:50% 0">Talon_06.xdc</span></div>
<div class="t" style="left:105px;top:117px;text-align:left;font-size:12.3px;line-height:20px;color:#000;"><span style="display:inline-block;transform:scaleX(0.88);transform-origin:0 0">86.51<span style="display:inline-block;transform:scaleX(0.8);transform-origin:0 0;margin-right:-2px">%</span></span></div>
<div class="t" style="left:160px;top:117px;text-align:left;font-size:12.3px;line-height:20px;color:#000;"><span style="display:inline-block;transform:scaleX(0.88);transform-origin:0 0">10.59<span style="display:inline-block;transform:scaleX(0.8);transform-origin:0 0;margin-right:-2px">%</span></span></div>
<div class="t" style="left:215px;top:117px;text-align:left;font-size:12.3px;line-height:20px;color:#000;"><span style="display:inline-block;transform:scaleX(0.88);transform-origin:0 0">2.90<span style="display:inline-block;transform:scaleX(0.8);transform-origin:0 0;margin-right:-2px">%</span></span></div>
<div class="t" style="left:270px;top:117px;text-align:left;font-size:12.3px;line-height:20px;color:#000;"><span style="display:inline-block;transform:scaleX(0.88);transform-origin:0 0">0.00<span style="display:inline-block;transform:scaleX(0.8);transform-origin:0 0;margin-right:-2px">%</span></span></div>
<div class="a" style="left:319px;top:119px;width:674px;height:18px;background:#c8ffc8"></div>
<div class="t" style="left:388px;top:117px;text-align:left;font-size:12.3px;line-height:20px;color:#000;"><span style="display:inline-block;transform:scaleX(0.88);transform-origin:0 0">00441634263030</span></div>
<div class="t" style="left:521px;top:117px;text-align:left;font-size:12.3px;line-height:20px;color:#000;"><span style="display:inline-block;transform:scaleX(0.88);transform-origin:0 0">00441634262696</span></div>
<div class="t" style="left:621px;top:117px;text-align:left;font-size:12.3px;line-height:20px;color:#000;"><span style="display:inline-block;transform:scaleX(0.88);transform-origin:0 0">GB304364487</span></div>
<div class="t" style="left:730px;top:117px;text-align:left;font-size:12.3px;line-height:20px;color:#000;"><span style="display:inline-block;transform:scaleX(0.88);transform-origin:0 0">-/-</span></div>
<div class="t" style="left:839px;top:117px;text-align:left;font-size:12.3px;line-height:20px;color:#000;"><span style="display:inline-block;transform:scaleX(0.88);transform-origin:0 0">304364487</span></div>
<div class="a" style="left:0;top:137px;width:993px;height:1px;background:#000"></div>
<div class="a" style="left:0;top:138px;width:18px;height:18px;background:linear-gradient(#5b8ad9,#1a449f);border-top:1px solid #8a8a8a;border-left:1px solid #8a8a8a"></div>
<div class="t" style="left:19px;top:136px;width:76px;text-align:center;font-size:12.3px;line-height:20px;color:#000;"><span style="display:inline-block;transform:scaleX(0.88);transform-origin:50% 0">Talon_07.xdc</span></div>
<div class="t" style="left:105px;top:136px;text-align:left;font-size:12.3px;line-height:20px;color:#000;"><span style="display:inline-block;transform:scaleX(0.88);transform-origin:0 0">86.51<span style="display:inline-block;transform:scaleX(0.8);transform-origin:0 0;margin-right:-2px">%</span></span></div>
<div class="t" style="left:160px;top:136px;text-align:left;font-size:12.3px;line-height:20px;color:#000;"><span style="display:inline-block;transform:scaleX(0.88);transform-origin:0 0">10.59<span style="display:inline-block;transform:scaleX(0.8);transform-origin:0 0;margin-right:-2px">%</span></span></div>
<div class="t" style="left:215px;top:136px;text-align:left;font-size:12.3px;line-height:20px;color:#000;"><span style="display:inline-block;transform:scaleX(0.88);transform-origin:0 0">2.90<span style="display:inline-block;transform:scaleX(0.8);transform-origin:0 0;margin-right:-2px">%</span></span></div>
<div class="t" style="left:270px;top:136px;text-align:left;font-size:12.3px;line-height:20px;color:#000;"><span style="display:inline-block;transform:scaleX(0.88);transform-origin:0 0">0.00<span style="display:inline-block;transform:scaleX(0.8);transform-origin:0 0;margin-right:-2px">%</span></span></div>
<div class="a" style="left:319px;top:138px;width:674px;height:18px;background:#c8ffc8"></div>
<div class="t" style="left:388px;top:136px;text-align:left;font-size:12.3px;line-height:20px;color:#000;"><span style="display:inline-block;transform:scaleX(0.88);transform-origin:0 0">00441634263030</span></div>
<div class="t" style="left:521px;top:136px;text-align:left;font-size:12.3px;line-height:20px;color:#000;"><span style="display:inline-block;transform:scaleX(0.88);transform-origin:0 0">00441634262696</span></div>
<div class="t" style="left:621px;top:136px;text-align:left;font-size:12.3px;line-height:20px;color:#000;"><span style="display:inline-block;transform:scaleX(0.88);transform-origin:0 0">GB304364487</span></div>
<div class="t" style="left:730px;top:136px;text-align:left;font-size:12.3px;line-height:20px;color:#000;"><span style="display:inline-block;transform:scaleX(0.88);transform-origin:0 0">-/-</span></div>
<div class="t" style="left:839px;top:136px;text-align:left;font-size:12.3px;line-height:20px;color:#000;"><span style="display:inline-block;transform:scaleX(0.88);transform-origin:0 0">304364487</span></div>
<div class="a" style="left:0;top:156px;width:993px;height:1px;background:#000"></div>
<div class="a" style="left:0;top:157px;width:18px;height:18px;background:linear-gradient(#5b8ad9,#1a449f);border-top:1px solid #8a8a8a;border-left:1px solid #8a8a8a"></div>
<div class="t" style="left:19px;top:155px;width:76px;text-align:center;font-size:12.3px;line-height:20px;color:#000;"><span style="display:inline-block;transform:scaleX(0.88);transform-origin:50% 0">Talon_08.xdc</span></div>
<div class="t" style="left:105px;top:155px;text-align:left;font-size:12.3px;line-height:20px;color:#000;"><span style="display:inline-block;transform:scaleX(0.88);transform-origin:0 0">86.51<span style="display:inline-block;transform:scaleX(0.8);transform-origin:0 0;margin-right:-2px">%</span></span></div>
<div class="t" style="left:160px;top:155px;text-align:left;font-size:12.3px;line-height:20px;color:#000;"><span style="display:inline-block;transform:scaleX(0.88);transform-origin:0 0">10.59<span style="display:inline-block;transform:scaleX(0.8);transform-origin:0 0;margin-right:-2px">%</span></span></div>
<div class="t" style="left:215px;top:155px;text-align:left;font-size:12.3px;line-height:20px;color:#000;"><span style="display:inline-block;transform:scaleX(0.88);transform-origin:0 0">2.90<span style="display:inline-block;transform:scaleX(0.8);transform-origin:0 0;margin-right:-2px">%</span></span></div>
<div class="t" style="left:270px;top:155px;text-align:left;font-size:12.3px;line-height:20px;color:#000;"><span style="display:inline-block;transform:scaleX(0.88);transform-origin:0 0">0.00<span style="display:inline-block;transform:scaleX(0.8);transform-origin:0 0;margin-right:-2px">%</span></span></div>
<div class="a" style="left:319px;top:157px;width:674px;height:18px;background:#c8ffc8"></div>
<div class="t" style="left:388px;top:155px;text-align:left;font-size:12.3px;line-height:20px;color:#000;"><span style="display:inline-block;transform:scaleX(0.88);transform-origin:0 0">00441634263030</span></div>
<div class="t" style="left:521px;top:155px;text-align:left;font-size:12.3px;line-height:20px;color:#000;"><span style="display:inline-block;transform:scaleX(0.88);transform-origin:0 0">00441634262696</span></div>
<div class="t" style="left:621px;top:155px;text-align:left;font-size:12.3px;line-height:20px;color:#000;"><span style="display:inline-block;transform:scaleX(0.88);transform-origin:0 0">GB304364487</span></div>
<div class="t" style="left:730px;top:155px;text-align:left;font-size:12.3px;line-height:20px;color:#000;"><span style="display:inline-block;transform:scaleX(0.88);transform-origin:0 0">-/-</span></div>
<div class="t" style="left:839px;top:155px;text-align:left;font-size:12.3px;line-height:20px;color:#000;"><span style="display:inline-block;transform:scaleX(0.88);transform-origin:0 0">304364487</span></div>
<div class="a" style="left:0;top:175px;width:993px;height:1px;background:#000"></div>
<div class="a" style="left:0;top:176px;width:18px;height:18px;background:linear-gradient(#5b8ad9,#1a449f);border-top:1px solid #8a8a8a;border-left:1px solid #8a8a8a"></div>
<div class="t" style="left:19px;top:174px;width:76px;text-align:center;font-size:12.3px;line-height:20px;color:#000;"><span style="display:inline-block;transform:scaleX(0.88);transform-origin:50% 0">Talon_09.xdc</span></div>
<div class="t" style="left:105px;top:174px;text-align:left;font-size:12.3px;line-height:20px;color:#000;"><span style="display:inline-block;transform:scaleX(0.88);transform-origin:0 0">83.61<span style="display:inline-block;transform:scaleX(0.8);transform-origin:0 0;margin-right:-2px">%</span></span></div>
<div class="t" style="left:160px;top:174px;text-align:left;font-size:12.3px;line-height:20px;color:#000;"><span style="display:inline-block;transform:scaleX(0.88);transform-origin:0 0">12.04<span style="display:inline-block;transform:scaleX(0.8);transform-origin:0 0;margin-right:-2px">%</span></span></div>
<div class="t" style="left:215px;top:174px;text-align:left;font-size:12.3px;line-height:20px;color:#000;"><span style="display:inline-block;transform:scaleX(0.88);transform-origin:0 0">4.35<span style="display:inline-block;transform:scaleX(0.8);transform-origin:0 0;margin-right:-2px">%</span></span></div>
<div class="t" style="left:270px;top:174px;text-align:left;font-size:12.3px;line-height:20px;color:#000;"><span style="display:inline-block;transform:scaleX(0.88);transform-origin:0 0">0.00<span style="display:inline-block;transform:scaleX(0.8);transform-origin:0 0;margin-right:-2px">%</span></span></div>
<div class="a" style="left:319px;top:176px;width:674px;height:18px;background:#c8ffc8"></div>
<div class="t" style="left:388px;top:174px;text-align:left;font-size:12.3px;line-height:20px;color:#000;"><span style="display:inline-block;transform:scaleX(0.88);transform-origin:0 0">00441634263030</span></div>
<div class="t" style="left:521px;top:174px;text-align:left;font-size:12.3px;line-height:20px;color:#000;"><span style="display:inline-block;transform:scaleX(0.88);transform-origin:0 0">00441634262696</span></div>
<div class="t" style="left:621px;top:174px;text-align:left;font-size:12.3px;line-height:20px;color:#000;"><span style="display:inline-block;transform:scaleX(0.88);transform-origin:0 0">GB304364487</span></div>
<div class="t" style="left:730px;top:174px;text-align:left;font-size:12.3px;line-height:20px;color:#000;"><span style="display:inline-block;transform:scaleX(0.88);transform-origin:0 0">-/-</span></div>
<div class="t" style="left:839px;top:174px;text-align:left;font-size:12.3px;line-height:20px;color:#000;"><span style="display:inline-block;transform:scaleX(0.88);transform-origin:0 0">304364487</span></div>
<div class="a" style="left:0;top:194px;width:993px;height:1px;background:#000"></div>
<div class="a" style="left:384px;top:24px;width:1px;height:171px;background:#c8c8c8"></div>
<div class="a" style="left:517px;top:24px;width:1px;height:171px;background:#c8c8c8"></div>
<div class="a" style="left:617px;top:24px;width:1px;height:171px;background:#c8c8c8"></div>
<div class="a" style="left:726px;top:24px;width:1px;height:171px;background:#c8c8c8"></div>
<div class="a" style="left:835px;top:24px;width:1px;height:171px;background:#c8c8c8"></div>
</div>
<div class="a chk" style="left:1007px;top:359px;width:16px;height:208px"></div>
<div class="sb" style="left:1007px;top:359px"><svg width="16" height="16" style="left:-1px;top:-1px" fill="#000"><rect x="8" y="6" width="1" height="1"/><rect x="7" y="7" width="3" height="1"/><rect x="6" y="8" width="5" height="1"/><rect x="5" y="9" width="7" height="1"/></svg></div>
<div class="thumb" style="left:1007px;top:481px;width:16px;height:70px"></div>
<div class="sb" style="left:1007px;top:551px"><svg width="16" height="16" style="left:-1px;top:-1px" fill="#000"><rect x="8" y="9" width="1" height="1"/><rect x="7" y="8" width="3" height="1"/><rect x="6" y="7" width="5" height="1"/><rect x="5" y="6" width="7" height="1"/></svg></div>
<div class="a chk" style="left:14px;top:567px;width:993px;height:16px"></div>
<div class="sb" style="left:14px;top:567px"><svg width="16" height="16" style="left:-1px;top:-1px" fill="#000"><rect x="5" y="8" width="1" height="1"/><rect x="6" y="7" width="1" height="3"/><rect x="7" y="6" width="1" height="5"/><rect x="8" y="5" width="1" height="7"/></svg></div>
<div class="thumb" style="left:133px;top:567px;width:76px;height:16px"></div>
<div class="sb" style="left:991px;top:567px"><svg width="16" height="16" style="left:-1px;top:-1px" fill="#000"><rect x="9" y="8" width="1" height="1"/><rect x="8" y="7" width="1" height="3"/><rect x="7" y="6" width="1" height="5"/><rect x="6" y="5" width="1" height="7"/></svg></div>
<div class="a" style="left:1007px;top:567px;width:16px;height:16px;background:#d4d0c8"></div>
<div class="btn" style="left:780px;top:594px;width:75px;height:24px"></div>
<div class="btn" style="left:861px;top:594px;width:75px;height:24px"></div>
<div class="btn" style="left:942px;top:594px;width:84px;height:24px"></div>
<div class="t" style="left:780px;top:596px;width:75px;text-align:center;font-size:12.3px;line-height:20px;color:#000;"><span style="display:inline-block;transform:scaleX(0.87);transform-origin:50% 0">Save...</span></div>
<div class="t" style="left:861px;top:596px;width:75px;text-align:center;font-size:12.3px;line-height:20px;color:#000;"><span style="display:inline-block;transform:scaleX(0.87);transform-origin:50% 0">Close</span></div>
<div class="t" style="left:981px;top:596px;text-align:left;font-size:12.3px;line-height:20px;color:#000;"><span style="display:inline-block;transform:scaleX(0.87);transform-origin:0 0">Help</span></div>
<svg class="a" style="left:947px;top:598px" width="16" height="16" viewBox="0 0 16 16"><circle cx="7.8" cy="7.8" r="6.6" fill="#2a5bd0" stroke="#e8eef8" stroke-width="1.3"/><text x="7.8" y="11.8" text-anchor="middle" font-family="Liberation Sans" font-weight="bold" font-size="11" fill="#fff">?</text></svg>
<div class="a" style="left:4px;top:628px;width:1025px;height:1px;background:#fff"></div>
<div class="t" style="left:7px;top:630px;text-align:left;font-size:12.3px;line-height:20px;color:#000;"><span style="display:inline-block;transform:scaleX(0.87);transform-origin:0 0">Elapsed Time: 11 seconds</span></div>
<div class="a" style="left:1029px;top:638px;width:2px;height:2px;background:#fff"></div>
<div class="a" style="left:1028px;top:637px;width:2px;height:2px;background:#808080"></div>
<div class="a" style="left:1025px;top:642px;width:2px;height:2px;background:#fff"></div>
<div class="a" style="left:1024px;top:641px;width:2px;height:2px;background:#808080"></div>
<div class="a" style="left:1029px;top:642px;width:2px;height:2px;background:#fff"></div>
<div class="a" style="left:1028px;top:641px;width:2px;height:2px;background:#808080"></div>
<div class="a" style="left:1021px;top:646px;width:2px;height:2px;background:#fff"></div>
<div class="a" style="left:1020px;top:645px;width:2px;height:2px;background:#808080"></div>
<div class="a" style="left:1025px;top:646px;width:2px;height:2px;background:#fff"></div>
<div class="a" style="left:1024px;top:645px;width:2px;height:2px;background:#808080"></div>
<div class="a" style="left:1029px;top:646px;width:2px;height:2px;background:#fff"></div>
<div class="a" style="left:1028px;top:645px;width:2px;height:2px;background:#808080"></div>
</body></html>
